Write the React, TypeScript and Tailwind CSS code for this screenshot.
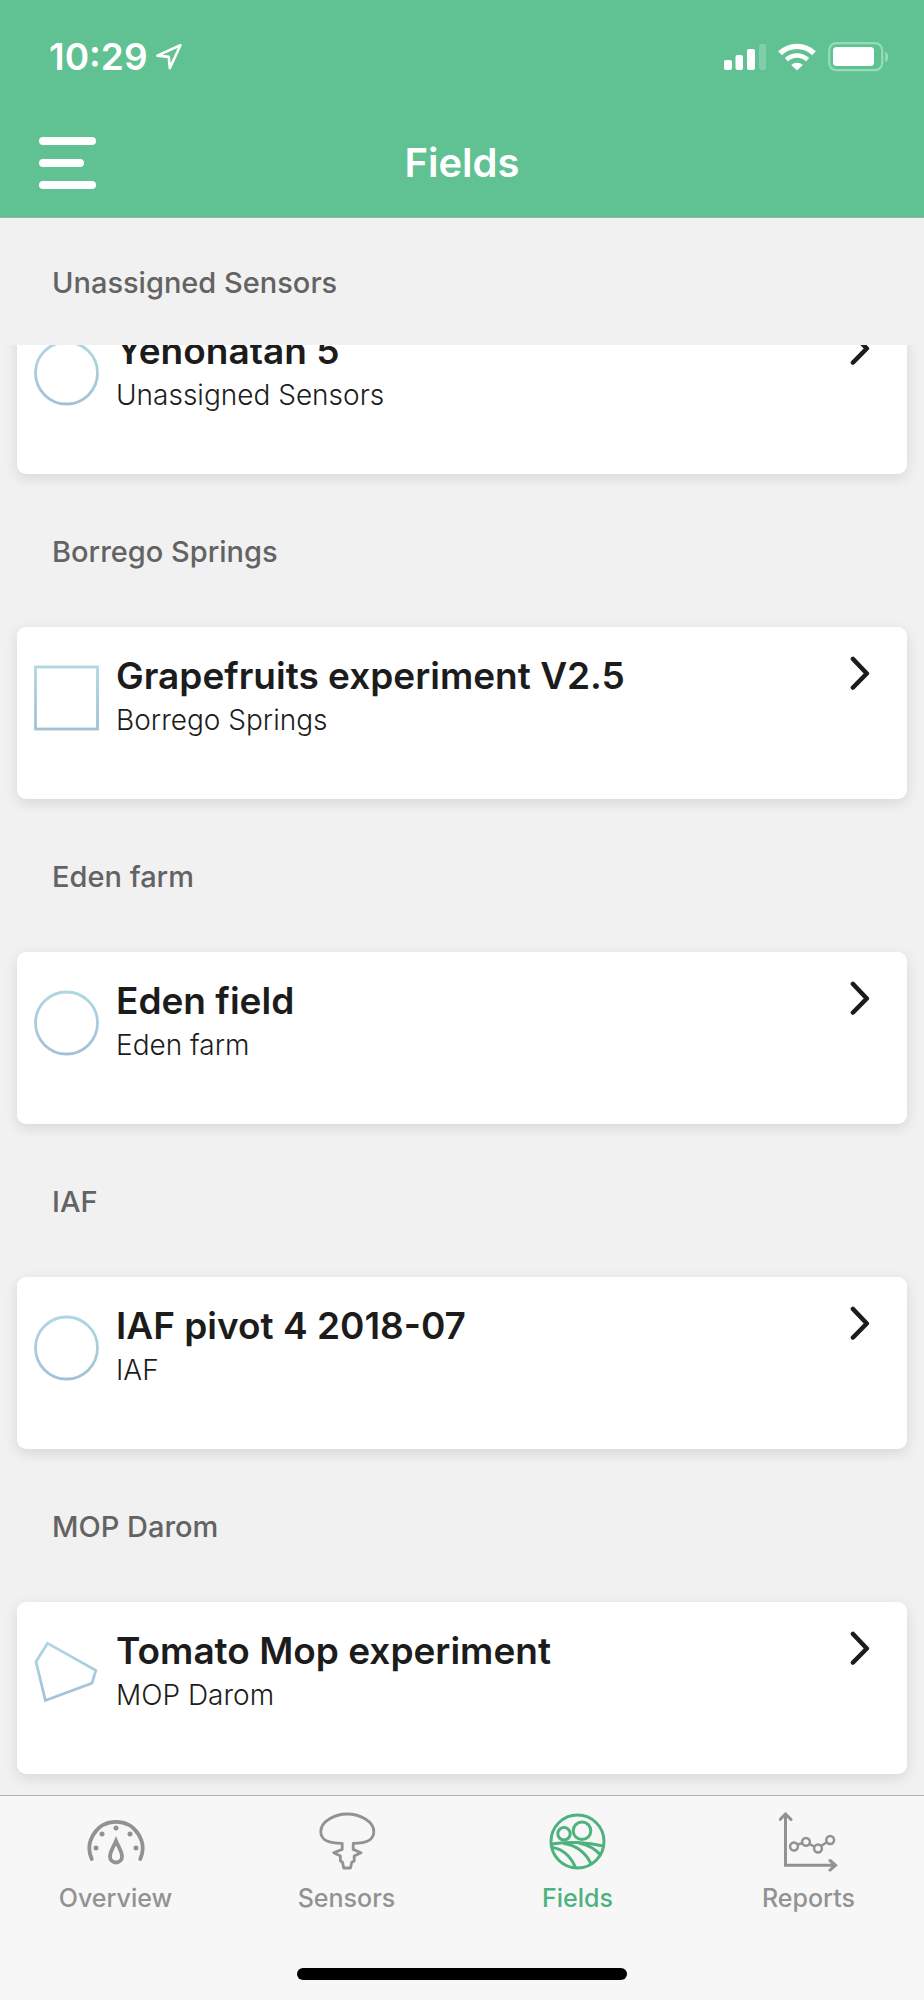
import type { ReactNode } from 'react'

type Shape = 'circle' | 'square' | 'polygon'

interface Field {
  name: string
  farm: string
  shape: Shape
}

const currentField: Field = { name: 'Yehonatan 5', farm: 'Unassigned Sensors', shape: 'circle' }

const fields: Field[] = [
  { name: 'Grapefruits experiment V2.5', farm: 'Borrego Springs', shape: 'square' },
  { name: 'Eden field', farm: 'Eden farm', shape: 'circle' },
  { name: 'IAF pivot 4 2018-07', farm: 'IAF', shape: 'circle' },
  { name: 'Tomato Mop experiment', farm: 'MOP Darom', shape: 'polygon' },
]

function StatusBar() {
  return (
    <div className="flex items-center justify-between pt-[33px] pr-[35px] pl-[49px] text-white">
      <div className="flex items-center gap-2">
        <span className="text-[37px] leading-12 font-semibold">10:29</span>
        <svg width="28" height="28" viewBox="0 0 28 28" fill="none" stroke="currentColor" strokeWidth="2.6" strokeLinejoin="round">
          <path d="M24.4 2.3 1.4 12.6l11.4 1.3 1 11.3z" />
        </svg>
      </div>
      <div className="flex items-center gap-3">
        <svg width="42" height="28" viewBox="0 0 42 28" fill="currentColor">
          <rect x="0" y="17" width="8" height="10" rx="2" />
          <rect x="11.5" y="12" width="7.5" height="15" rx="2" />
          <rect x="23" y="6" width="8" height="21" rx="2" />
          <rect x="35" y="1" width="7" height="26" rx="2" opacity=".22" />
        </svg>
        <svg width="38" height="28" viewBox="0 0 38 28" fill="none" stroke="currentColor">
          <path d="M2 10.2a24.5 24.5 0 0 1 34 0" strokeWidth="5.4" />
          <path d="M8.4 16.7a15.6 15.6 0 0 1 21.2 0" strokeWidth="4.6" />
          <path d="M19 27.6l-5.8-5.6a8.6 8.6 0 0 1 11.6 0z" fill="currentColor" stroke="none" />
        </svg>
        <svg width="61" height="30" viewBox="0 0 61 30" fill="none">
          <rect x="1.2" y="1.2" width="53" height="27" rx="7" stroke="#96ddb7" strokeWidth="2.2" />
          <rect x="5" y="5" width="41" height="19" rx="3.5" fill="currentColor" />
          <path d="M57.2 9.5c4 2 4 9 0 11z" fill="#96ddb7" />
        </svg>
      </div>
    </div>
  )
}

function FieldShape({ shape }: { shape: Shape }) {
  const stroke = `url(#edge-${shape})`
  return (
    <svg className="mt-[38px] shrink-0" width="66" height="66" viewBox="0 0 66 66" fill="none" strokeWidth="2.8">
      <defs>
        <linearGradient id={`edge-${shape}`} gradientUnits="userSpaceOnUse" x1="33" y1="0" x2="33" y2="66">
          <stop offset="0" stopColor="#b0d8e2" />
          <stop offset="1" stopColor="#a3bfd6" />
        </linearGradient>
      </defs>
      {shape === 'circle' && <circle cx="32.5" cy="33" r="31" stroke={stroke} />}
      {shape === 'square' && <rect x="1.5" y="2" width="62" height="62" stroke={stroke} />}
      {shape === 'polygon' && (
        <path d="M13.6 3.3 2 21.8l9.4 38.7 46.6-17.4 3.8-12.7z" stroke={stroke} />
      )}
    </svg>
  )
}

function SectionHeader({ children }: { children: ReactNode }) {
  return (
    <h2 className="relative z-10 flex h-[127px] items-center bg-[#f1f1f1] px-[52px] pt-0.5 text-[29px] font-medium text-[#636363]">
      {children}
    </h2>
  )
}

function FieldCard({ field }: { field: Field }) {
  return (
    <a
      href="#field"
      className="mx-[17px] flex h-[172px] items-start rounded-[9px] bg-white pr-[37px] pl-[17px] text-[#1c1c1c] shadow-[0_4px_14px_rgba(0,0,0,0.11)]"
    >
      <FieldShape shape={field.shape} />
      <div className="ml-4 min-w-0 flex-1 pt-[25px]">
        <div className="truncate text-[37px] leading-12 font-semibold">{field.name}</div>
        <div className="truncate text-[28px] leading-10 font-light">{field.farm}</div>
      </div>
      <svg
        className="mt-[29px] shrink-0"
        width="20"
        height="36"
        viewBox="0 0 20 36"
        fill="none"
        stroke="currentColor"
        strokeWidth="4.6"
        strokeLinecap="round"
        strokeLinejoin="round"
      >
        <path d="M3 3l13.8 14.5L3 31.5" />
      </svg>
    </a>
  )
}

function Tab({ label, active, children }: { label: string; active?: boolean; children: ReactNode }) {
  return (
    <a
      href={`#${label.toLowerCase()}`}
      aria-current={active ? 'page' : undefined}
      className={`flex flex-1 flex-col items-center pt-4 text-[25px] leading-8 font-medium ${active ? 'text-[#4cb27e]' : 'text-[#929292]'}`}
    >
      <svg className="mb-[10px]" width="60" height="60" viewBox="0 0 60 60" fill="none" stroke="currentColor">
        {children}
      </svg>
      {label}
    </a>
  )
}

function TabBar() {
  return (
    <footer className="border-t border-[#b2b2b2] bg-[#f7f7f7] pb-5">
      <nav className="flex h-[152px]">
        <Tab label="Overview">
          <path d="M5.7 47a26.5 26.5 0 1 1 48.6 0" strokeWidth="3.8" strokeLinecap="round" />
          <g fill="currentColor" stroke="none">
            <circle cx="10" cy="36" r="2.5" />
            <circle cx="16" cy="22" r="2.5" />
            <circle cx="30" cy="16" r="2.5" />
            <circle cx="44" cy="22" r="2.5" />
            <circle cx="50" cy="36" r="2.5" />
          </g>
          <path d="M30 29c-2 5-6 10.5-6 15.5a6 6 0 0 0 12 0c0-5-4-10.5-6-15.5z" strokeWidth="3.8" />
        </Tab>
        <Tab label="Sensors">
          <path
            d="M25.2 31.4C11.5 31.4 3.8 28.5 3.8 19.5 3.8 9.5 17.5 2 30.3 2s26.5 7.5 26.5 17.5c0 9-7.5 11.900-20.6 11.900v6l7.8 3.3-6.8 3.2v5l-2.4 1.3-1.3 5.8h-6.8l-1.2-5.8-2.1-1.3v-5l-6.7-3.2 8.5-3.3z"
            strokeWidth="2.8"
            strokeLinejoin="round"
          />
        </Tab>
        <Tab label="Fields" active>
          <g strokeWidth="3">
            <circle cx="29.5" cy="29.5" r="26.5" />
            <circle cx="16" cy="21.7" r="6.2" />
            <circle cx="34" cy="18.8" r="8.8" />
            <path d="M4 32c14-3 36-1.5 51.5 2" />
            <path d="M4.5 35.5C14 37 22 43 27.5 55.5" />
            <path d="M15.5 31.5C28 33 37 40 43 51.5" />
            <path d="M31 31C39 32.5 47 36.5 53 43.5" />
          </g>
        </Tab>
        <Tab label="Reports">
          <path d="M6.5 3v50.3h49M1 7.5 6.5 2 12 7.5M51 48.5l5.5 4.8-5.5 4.8" strokeWidth="3" strokeLinecap="round" />
          <g strokeWidth="2.5">
            <path d="M18.7 32.5l4.5-1.3M30.5 32l5.3 2.8M42 34l6.2-4" />
            <circle cx="15" cy="34.5" r="3.9" />
            <circle cx="27" cy="29.8" r="3.9" />
            <circle cx="39" cy="36.5" r="3.9" />
            <circle cx="51.2" cy="28" r="3.9" />
          </g>
        </Tab>
      </nav>
      <div className="mx-auto mt-5 h-3 w-[330px] rounded-full bg-black" />
    </footer>
  )
}

export default function App() {
  return (
    <div className="flex min-h-screen flex-col bg-[#f1f1f1] font-['Inter',sans-serif]">
      <header className="h-[218px] border-b border-[#8fb9a2] bg-[#60c192]">
        <StatusBar />
        <div className="mt-[54px] grid grid-cols-[1fr_auto_1fr] items-center px-[39px] text-white">
          <button aria-label="Menu" className="flex w-[57px] flex-col gap-[14px]">
            <span className="h-2 w-full rounded-full bg-white" />
            <span className="h-2 w-[45px] rounded-full bg-white" />
            <span className="h-2 w-full rounded-full bg-white" />
          </button>
          <h1 className="text-[40px] leading-[56px] font-semibold">Fields</h1>
        </div>
      </header>
      <main className="flex-1 pb-[13px]">
        <SectionHeader>{currentField.farm}</SectionHeader>
        {/* scrolled part of the way under its section header */}
        <div className="-mt-[43px] mb-[13px]">
          <FieldCard field={currentField} />
        </div>
        {fields.map((f) => (
          <section key={f.name} className="mb-[13px] last:mb-0">
            <SectionHeader>{f.farm}</SectionHeader>
            <div className="mt-[13px]">
              <FieldCard field={f} />
            </div>
          </section>
        ))}
      </main>
      <TabBar />
    </div>
  )
}
